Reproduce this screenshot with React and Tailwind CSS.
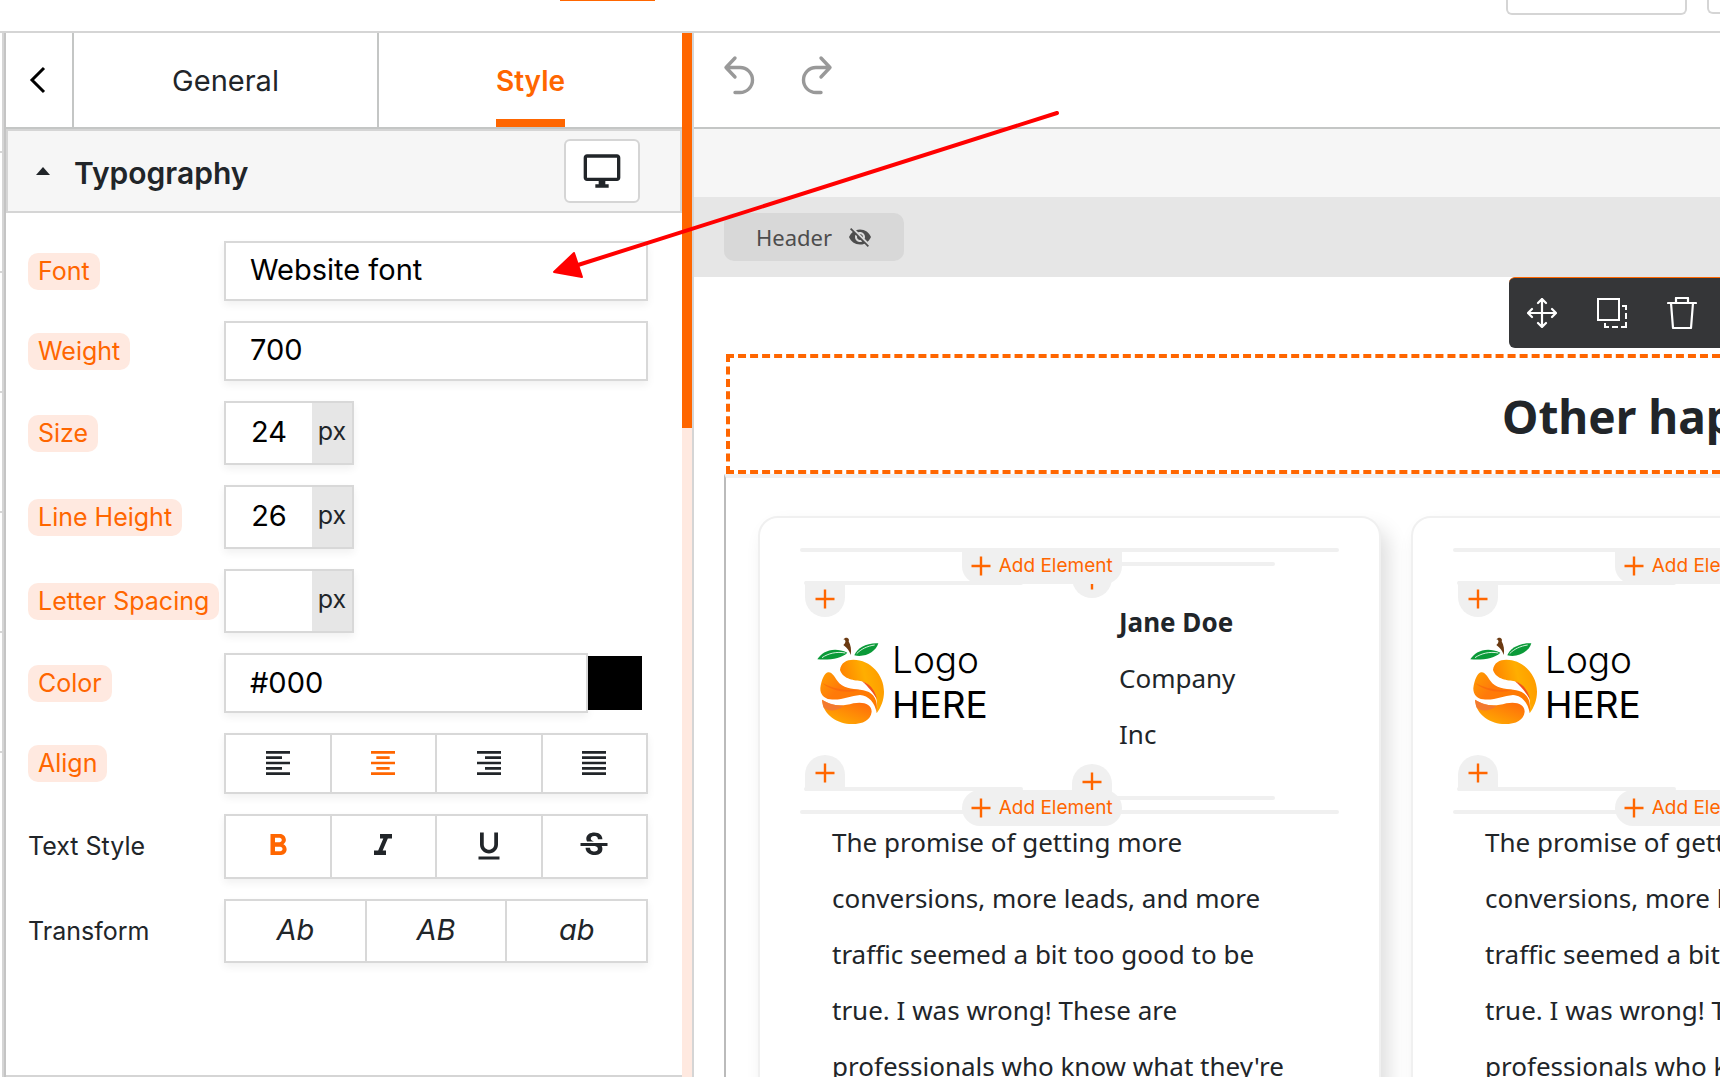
import {
  MdFormatAlignLeft,
  MdFormatAlignCenter,
  MdFormatAlignRight,
  MdFormatAlignJustify,
  MdFormatBold,
  MdFormatItalic,
  MdFormatUnderlined,
  MdStrikethroughS,
  MdOutlineDesktopWindows,
  MdVisibilityOff,
} from 'react-icons/md';

const LABEL = 'rounded-[10px] bg-[#ffe9e0] px-[10px] text-[25px] leading-[37px] text-[#ff6600] whitespace-nowrap';
const PLAIN = 'text-[25px] leading-[37px] text-[#212529] whitespace-nowrap';
const BOX = 'border-2 border-[#d8d8d8] bg-white shadow-[0_4px_8px_rgba(0,0,0,0.06)]';

function Row({ label, htmlFor, plain, children }) {
  return (
    <div className="flex items-center">
      <div className="flex w-[196px] shrink-0">
        {htmlFor ? (
          <label htmlFor={htmlFor} className={plain ? PLAIN : LABEL}>{label}</label>
        ) : (
          <span className={plain ? PLAIN : LABEL}>{label}</span>
        )}
      </div>
      {children}
    </div>
  );
}

function Picker({ id, value }) {
  return (
    <select
      id={id}
      defaultValue={value}
      className={`h-[60px] flex-1 appearance-none px-6 pb-[2px] text-[29px] text-black outline-none ${BOX}`}
    >
      <option>{value}</option>
    </select>
  );
}

function Unit({ id, value }) {
  return (
    <div className={`flex h-16 w-[130px] ${BOX}`}>
      <input id={id} type="text" defaultValue={value} className="w-[86px] pb-[2px] text-center text-[29px] text-black outline-none" />
      <span className="flex flex-1 items-center justify-center bg-[#e6e6e6] pb-[2px] text-[25px] text-[#212529]">px</span>
    </div>
  );
}

function Choices({ label, items, height }) {
  return (
    <div role="group" aria-label={label} className={`flex flex-1 divide-x-2 divide-[#d8d8d8] ${height} ${BOX}`}>
      {items.map(({ name, active, content }) => (
        <button
          key={name}
          type="button"
          aria-label={name}
          aria-pressed={!!active}
          className={`flex flex-1 items-center justify-center pb-[2px] ${active ? 'text-[#ff6600]' : 'text-[#212529]'}`}
        >
          {content}
        </button>
      ))}
    </div>
  );
}

const ALIGN = [
  { name: 'Align left', content: <MdFormatAlignLeft size={32} /> },
  { name: 'Align center', active: true, content: <MdFormatAlignCenter size={32} /> },
  { name: 'Align right', content: <MdFormatAlignRight size={32} /> },
  { name: 'Justify', content: <MdFormatAlignJustify size={32} /> },
];

const TEXT_STYLE = [
  { name: 'Bold', active: true, content: <MdFormatBold size={36} /> },
  { name: 'Italic', content: <MdFormatItalic size={36} /> },
  { name: 'Underline', content: <MdFormatUnderlined size={36} /> },
  { name: 'Strikethrough', content: <MdStrikethroughS size={36} /> },
];

const TRANSFORM = [
  { name: 'Capitalize', content: <span className="text-[29px] italic">Ab</span> },
  { name: 'Uppercase', content: <span className="text-[29px] italic">AB</span> },
  { name: 'Lowercase', content: <span className="text-[29px] italic">ab</span> },
];

function SettingsPanel() {
  return (
    <aside className="flex w-[688px] shrink-0 border-r-2 border-[#d5d5d5] font-['Inter',sans-serif]">
      <div className="flex min-w-0 flex-1 flex-col">
        <div className="flex h-24 border-b-2 border-[#c4c6c5]">
          <button type="button" aria-label="Back" className="flex w-[68px] items-center justify-center border-r-2 border-[#c4c6c5] pr-1">
            <svg width="18" height="28" viewBox="0 0 18 28" fill="none" stroke="#000" strokeWidth="3">
              <path d="M16 2 4 14 16 26" />
            </svg>
          </button>
          <button type="button" className="flex-1 border-r-2 border-[#c4c6c5] pt-[2px] text-[29px] text-[#212529]">General</button>
          <button type="button" className="flex flex-1 items-stretch justify-center text-[28px] font-semibold text-[#ff6600]">
            <span className="flex items-center border-b-8 border-[#ff6600] pt-[10px]">Style</span>
          </button>
        </div>
        <div className="flex h-[84px] items-center border-2 border-[#d5d5d5] bg-[#f6f6f6] pr-10 pl-7">
          <svg width="14" height="8" viewBox="0 0 14 8" fill="#212529">
            <path d="M7 0 14 8H0Z" />
          </svg>
          <h2 className="ml-6 pt-1 text-[30px] font-semibold text-[#212529]">Typography</h2>
          <button type="button" aria-label="Desktop view" className="ml-auto flex h-16 w-[76px] items-center justify-center rounded-md border-2 border-[#d5d5d5] bg-white text-[#212529]">
            <MdOutlineDesktopWindows size={40} />
          </button>
        </div>
        <form className="flex flex-1 flex-col gap-5 border-b-2 border-[#d5d5d5] pt-7 pr-[34px] pl-[22px]">
          <Row label="Font" htmlFor="font"><Picker id="font" value="Website font" /></Row>
          <Row label="Weight" htmlFor="weight"><Picker id="weight" value="700" /></Row>
          <Row label="Size" htmlFor="size"><Unit id="size" value="24" /></Row>
          <Row label="Line Height" htmlFor="line-height"><Unit id="line-height" value="26" /></Row>
          <Row label="Letter Spacing" htmlFor="letter-spacing"><Unit id="letter-spacing" value="" /></Row>
          <Row label="Color" htmlFor="color">
            <input id="color" type="text" defaultValue="#000" className={`h-[60px] min-w-0 flex-1 px-6 pb-[2px] text-[29px] text-black outline-none ${BOX}`} />
            <button type="button" aria-label="Pick color" className="mr-[6px] h-[54px] w-[54px] bg-black" />
          </Row>
          <Row label="Align"><Choices label="Align" items={ALIGN} height="h-[61px]" /></Row>
          <Row label="Text Style" plain><Choices label="Text Style" items={TEXT_STYLE} height="h-[65px]" /></Row>
          <Row label="Transform" plain><Choices label="Transform" items={TRANSFORM} height="h-16" /></Row>
        </form>
      </div>
      <div className="w-[10px] bg-[#ffe9e0]">
        <div className="h-[395px] bg-[#ff6600]" />
      </div>
    </aside>
  );
}

function Plus() {
  return (
    <svg width="20" height="20" viewBox="0 0 20 20" stroke="#ff6600" strokeWidth="2.4">
      <path d="M10 0.5V19.5M0.5 10H19.5" />
    </svg>
  );
}

function Bar() {
  return <div className="h-1 rounded-full bg-[#f0f0f0]" />;
}

function AddElement({ place }) {
  return (
    <button
      type="button"
      className={`absolute left-[30%] z-10 flex h-9 w-40 items-center justify-center gap-2 bg-[#f0f0f0] font-['Inter',sans-serif] text-[19px] whitespace-nowrap text-[#ff6600] ${place}`}
    >
      <Plus />
      Add Element
    </button>
  );
}

function AddSmall({ place }) {
  return (
    <button type="button" aria-label="Add element" className={`absolute flex h-9 w-10 items-center justify-center bg-[#f0f0f0] ${place}`}>
      <Plus />
    </button>
  );
}

function OrangeLogo({ id }) {
  return (
    <div className="flex items-end pt-[50px] pl-[11px]">
      <svg width="72" height="92" viewBox="45 45 216 276" aria-hidden="true">
        <defs>
          <linearGradient id={`${id}-top`} x1="0" y1="0.6" x2="1" y2="0.3">
            <stop offset="0" stopColor="#ff7a00" />
            <stop offset="0.6" stopColor="#ffae00" />
            <stop offset="1" stopColor="#ff9a00" />
          </linearGradient>
          <linearGradient id={`${id}-mid`} x1="0" y1="0" x2="0.9" y2="0.6">
            <stop offset="0" stopColor="#ffa000" />
            <stop offset="0.45" stopColor="#ff7a0a" />
            <stop offset="1" stopColor="#ff7a00" />
          </linearGradient>
          <linearGradient id={`${id}-low`} x1="0.2" y1="1" x2="0.9" y2="0.1">
            <stop offset="0" stopColor="#ffae00" />
            <stop offset="1" stopColor="#ff6a0c" />
          </linearGradient>
        </defs>
        <path d="M52 118C65 95 100 78 142 98C125 115 90 121 52 118Z" fill="#0a9a38" />
        <path d="M66 113C85 100 110 94 136 99" stroke="#d5f0dc" strokeWidth="3" fill="none" />
        <path d="M163 106C170 85 200 68 235 70C228 95 195 114 163 106Z" fill="#0a9a38" />
        <path d="M170 101C182 88 202 78 224 75" stroke="#d5f0dc" strokeWidth="3" fill="none" />
        <path d="M130 58C138 48 150 55 146 64C152 75 155 90 152 105C148 92 142 84 130 75C137 70 140 60 130 58Z" fill="#6b3a12" />
        <path d="M120 150C122 128 140 119 160 119C212 119 252 165 252 215C252 240 243 262 230 280C231 268 233 255 229 236C223 212 205 190 185 184C165 180 130 180 120 150Z" fill={`url(#${id}-top)`} />
        <path d="M186 184C206 190 224 206 231 238C222 222 205 200 186 184Z" fill="#f2541b" />
        <path d="M84 157C98 155 104 174 118 190C138 209 165 206 190 211C218 217 236 235 230 280C226 248 205 226 180 225C150 228 125 242 90 238C72 236 60 222 61 204C64 180 74 158 84 157Z" fill={`url(#${id}-mid)`} />
        <path d="M66 188C90 202 130 214 178 209C150 221 95 215 66 188Z" fill="#f8600f" opacity="0.6" />
        <path d="M66 239C90 255 120 262 160 250C190 244 215 252 215 275C212 300 190 312 155 312C115 312 68 285 66 239Z" fill={`url(#${id}-low)`} />
        <path d="M66 239C88 252 108 256 130 258C110 276 80 274 70 262Z" fill="#f0743a" opacity="0.8" />
      </svg>
      <div className="ml-[5px] font-['Inter',sans-serif] text-[37px] leading-[45px] text-black">
        <div className="font-light">Logo</div>
        <div>HERE</div>
      </div>
    </div>
  );
}

function Card({ id }) {
  return (
    <article className="w-[623px] shrink-0 rounded-[20px] border-2 border-[#f0f0f0] bg-white px-10 pt-[30px] shadow-[8px_12px_20px_rgba(0,0,0,0.13)]">
      <div className="relative">
        <Bar />
        <AddElement place="top-0 rounded-b-[18px]" />
        <div className="my-[10px] ml-1 flex items-start gap-[33px]">
          <div className="relative mt-[19px] flex h-[210px] w-[219px] flex-col justify-between">
            <Bar />
            <AddSmall place="top-0 left-px rounded-b-[20px]" />
            <div className="flex-1"><OrangeLogo id={id} /></div>
            <Bar />
            <AddSmall place="bottom-0 left-px rounded-t-[20px]" />
          </div>
          <div className="relative w-[219px]">
            <Bar />
            <AddSmall place="top-0 left-4 rounded-b-[20px]" />
            <p className="pt-7 pr-9 pb-[34px] pl-[63px] text-[26px] leading-[56px] text-[#212529]">
              <b className="whitespace-nowrap">Jane Doe</b><br />Company Inc
            </p>
            <Bar />
            <AddSmall place="bottom-0 left-4 rounded-t-[20px]" />
          </div>
        </div>
        <Bar />
        <AddElement place="-bottom-3 rounded-full" />
      </div>
      <p className="pl-8 text-[26px] leading-[56px] whitespace-nowrap text-[#212529]">
        The promise of getting more<br />
        conversions, more leads, and more<br />
        traffic seemed a bit too good to be<br />
        true. I was wrong! These are<br />
        professionals who know what they're
      </p>
    </article>
  );
}

function Canvas() {
  return (
    <main className="flex min-w-0 flex-1 flex-col overflow-hidden font-['Noto_Sans',sans-serif]">
      <div className="flex h-24 shrink-0 items-start gap-[46px] border-b-2 border-[#c4c6c5] pt-[22px] pl-[29px]">
        <button type="button" aria-label="Undo">
          <svg width="32" height="40" viewBox="0 0 32 40" fill="none" stroke="#999" strokeWidth="3.4" strokeLinecap="round" strokeLinejoin="round">
            <path d="M12 3 3 12.5 12 22M3 12.5H17A12.5 12.5 0 0 1 17 37.5H12" />
          </svg>
        </button>
        <button type="button" aria-label="Redo">
          <svg width="32" height="40" viewBox="0 0 32 40" fill="none" stroke="#999" strokeWidth="3.4" strokeLinecap="round" strokeLinejoin="round">
            <path d="M20 3 29 12.5 20 22M29 12.5H15A12.5 12.5 0 0 0 15 37.5H20" />
          </svg>
        </button>
      </div>
      <div className="h-[68px] shrink-0 bg-[#f6f6f6]" />
      <div className="flex h-20 shrink-0 items-center bg-[#e6e6e6] pl-[30px]">
        <button type="button" className="flex h-12 w-[180px] items-center justify-center gap-4 rounded-[10px] bg-[#d8d8d8] text-[22px] text-[#4d4d4d]">
          Header
          <MdVisibilityOff size={24} />
        </button>
      </div>
      <section className="relative shrink-0 pt-[77px] pl-8">
        <div className="absolute top-0 right-0 flex h-[71px] w-[211px] items-center gap-10 rounded-l-md border-t border-[#ff6600] bg-[#353638] pl-[18px]">
          <button type="button" aria-label="Move">
            <svg width="30" height="30" viewBox="0 0 30 30" fill="none" stroke="#fff" strokeWidth="2.2" strokeLinecap="round" strokeLinejoin="round">
              <path d="M15 1V29M1 15H29M11 5 15 1 19 5M11 25 15 29 19 25M5 11 1 15 5 19M25 11 29 15 25 19" />
            </svg>
          </button>
          <button type="button" aria-label="Duplicate">
            <svg width="30" height="30" viewBox="0 0 30 30" fill="none" stroke="#fff" strokeWidth="2">
              <path d="M1 1H22V22H1Z" />
              <path d="M25 8H29V12M29 15V21M29 24V29H24M21 29H15M12 29H8V25" />
            </svg>
          </button>
          <button type="button" aria-label="Delete">
            <svg width="30" height="32" viewBox="0 0 30 32" fill="none" stroke="#fff" strokeWidth="2.2" strokeLinecap="round" strokeLinejoin="round">
              <path d="M1 6H29M9 6V1H21V6M4 6 6 31H24L26 6" />
            </svg>
          </button>
        </div>
        <div className="flex h-[120px] items-center justify-end border-4 border-r-0 border-dashed border-[#ff6600]">
          <h1 className="w-[218px] pt-1 text-[46px] leading-[60px] font-bold whitespace-nowrap text-[#212529]">Other happy</h1>
        </div>
      </section>
      <section className="ml-[30px] flex flex-1 gap-[30px] border-t-4 border-l-2 border-t-[#f0f0f0] border-l-[#bbb] pt-[38px] pl-8">
        <Card id="a" />
        <Card id="b" />
      </section>
    </main>
  );
}

export default function App() {
  return (
    <div className="relative flex h-screen flex-col overflow-hidden bg-white">
      <header className="flex h-[33px] shrink-0 items-start border-b-2 border-[#d5d5d5] pl-[560px]">
        <div className="h-px w-[95px] bg-[#ff6600]" />
        <div className="ml-auto flex gap-5">
          <button type="button" aria-label="Preview" className="h-[15px] w-[181px] rounded-b-md border-2 border-t-0 border-[#d5d5d5]" />
          <button type="button" aria-label="Publish" className="h-[14px] w-[13px] rounded-bl-md border-2 border-t-0 border-r-0 border-[#d5d5d5]" />
        </div>
      </header>
      <div className="flex min-h-0 flex-1">
        <div className="w-1 shrink-0 border-r-2 border-[#d5d5d5]">
          {[1, 2, 3, 4, 5, 6].map((n) => (
            <div key={n} className="h-[120px] border-b-2 border-[#d5d5d5]" />
          ))}
        </div>
        <div className="w-[2px] shrink-0 bg-[#c4c4c4]" />
        <SettingsPanel />
        <Canvas />
      </div>
      <svg className="pointer-events-none absolute top-[108px] left-[550px] z-20" width="512" height="172" viewBox="0 0 512 172" aria-hidden="true">
        <path d="M28 157 507 5" stroke="#f00" strokeWidth="4" strokeLinecap="round" />
        <path d="M4 164 24 145 32 169Z" fill="#f00" stroke="#f00" strokeWidth="2" strokeLinejoin="round" />
      </svg>
    </div>
  );
}
